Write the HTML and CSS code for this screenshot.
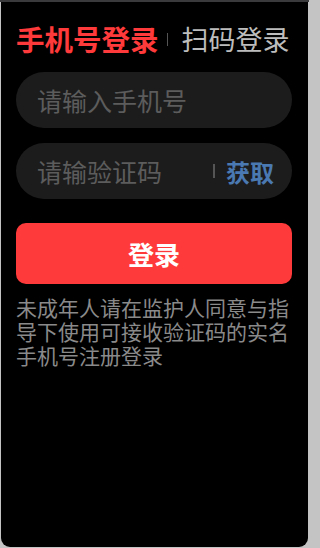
FILE: index.html
```html
<!DOCTYPE html>
<html lang="zh">
<head>
<meta charset="utf-8">
<title>手机号登录</title>
<link rel="stylesheet" href="styles.css">
</head>
<body>
<div class="frame">
  <div class="topline"></div>
  <main class="panel">
    <div class="tabs">
      <span class="tab active">手机号登录</span>
      <span class="tab-sep"></span>
      <span class="tab">扫码登录</span>
    </div>
    <div class="field">
      <span class="placeholder">请输入手机号</span>
    </div>
    <div class="field code">
      <span class="placeholder">请输验证码</span>
      <span class="field-sep"></span>
      <span class="get">获取</span>
    </div>
    <button class="login">登录</button>
    <p class="notice">未成年人请在监护人同意与指导下使用可接收验证码的实名手机号注册登录</p>
  </main>
</div>
</body>
</html>
```
FILE: styles.css
```css
html, body {
  margin: 0;
  padding: 0;
  height: 548px;
  overflow: hidden;
  background: #c4c4c4;
  font-family: "Noto Sans CJK SC", "Noto Sans", sans-serif;
}
.frame {
  width: 309px;
  height: 548px;
  background: #c4c4c4;
}
.topline {
  height: 2px;
  background: #3a3a3c;
}
.panel {
  margin: 0 1px;
  width: 307px;
  height: 545px;
  background: #000;
  border-radius: 0 0 9px 9px;
  padding: 0 16px 0 15px;
  box-sizing: border-box;
  display: flex;
  flex-direction: column;
}
.tabs {
  display: flex;
  align-items: center;
  height: 36px;
  margin-top: 19px;
  margin-bottom: 15px;
}
.tab {
  font-size: 27px;
  color: #bdbdbd;
  line-height: 36px;
  white-space: nowrap;
}
.tab.active {
  font-size: 28.5px;
  font-weight: bold;
  color: #ff3a3a;
}
.tab-sep {
  width: 1px;
  height: 13px;
  background: #555;
  margin: 0 14px 0 8px;
}
.field {
  height: 56px;
  border-radius: 28px;
  background: #1c1c1c;
  display: flex;
  align-items: center;
  padding: 0 18px 0 21px;
}
.field.code {
  margin-top: 15px;
}
.placeholder {
  font-size: 25px;
  color: #5c5c5c;
  flex: 1;
}
.field-sep {
  width: 2px;
  height: 14px;
  background: #555;
  margin-right: 11px;
}
.get {
  font-size: 24px;
  font-weight: bold;
  color: #4a78b0;
}
.login {
  margin-top: 24px;
  height: 61px;
  border: none;
  border-radius: 10px;
  background: #ff3a3a;
  color: #fff;
  font-family: inherit;
  font-size: 26px;
  font-weight: bold;
  padding: 0;
}
.notice {
  margin: 11px 0 0;
  font-size: 21px;
  line-height: 24px;
  color: #8a8a8a;
}
```
